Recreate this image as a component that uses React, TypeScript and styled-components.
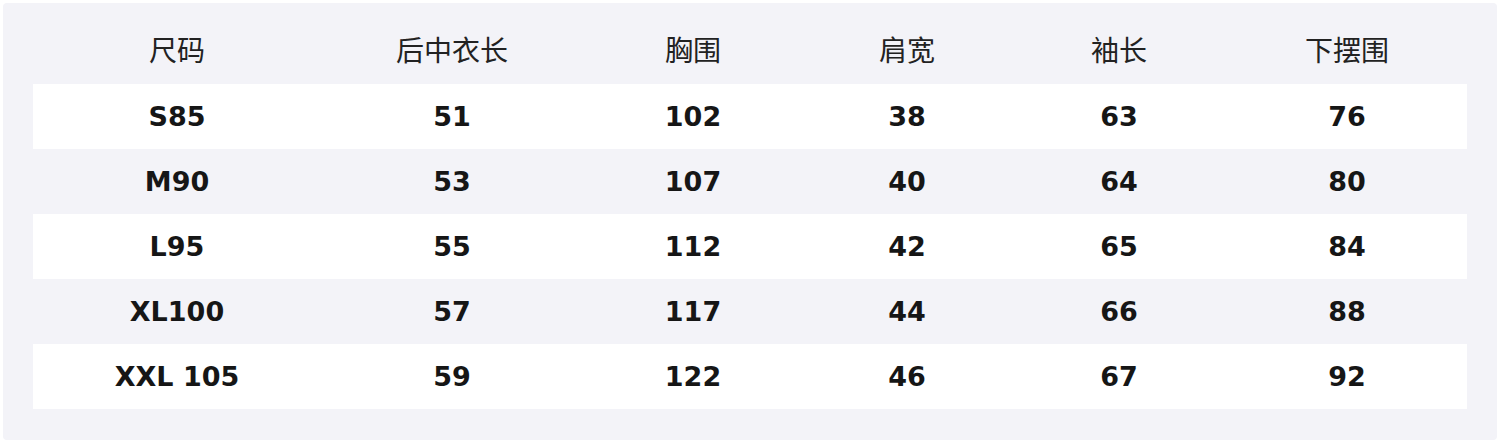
import React from 'react';
import styled, { createGlobalStyle } from 'styled-components';

const GlobalStyle = createGlobalStyle`
  html, body {
    margin: 0;
    padding: 0;
    background: #ffffff;
  }
`;

const Page = styled.div`
  padding: 3px;
  width: 1500px;
  height: 443px;
  box-sizing: border-box;
`;

const Panel = styled.div`
  background: #f3f3f8;
  border-radius: 4px;
  height: 100%;
  box-sizing: border-box;
  padding: 16px 30px 31px 30px;
`;

const COLS = '288px 262px 220px 208px 216px 240px';

const Row = styled.div<{ $striped?: boolean }>`
  display: grid;
  grid-template-columns: ${COLS};
  height: 65px;
  align-items: center;
  background: ${(p) => (p.$striped ? '#ffffff' : 'transparent')};
`;

const HeadCell = styled.div`
  text-align: center;
  font-family: "Noto Sans CJK SC", "Noto Sans", sans-serif;
  font-size: 28px;
  font-weight: 400;
  color: #222222;
  padding-bottom: 5px;
`;

const Cell = styled.div`
  text-align: center;
  font-family: "DejaVu Sans", "Noto Sans", sans-serif;
  font-size: 27px;
  font-weight: 700;
  color: #161616;
`;

const headers = ['尺码', '后中衣长', '胸围', '肩宽', '袖长', '下摆围'];

const rows = [
  ['S85', '51', '102', '38', '63', '76'],
  ['M90', '53', '107', '40', '64', '80'],
  ['L95', '55', '112', '42', '65', '84'],
  ['XL100', '57', '117', '44', '66', '88'],
  ['XXL 105', '59', '122', '46', '67', '92'],
];

function App() {
  return (
    <Page>
      <GlobalStyle />
      <Panel>
        <Row>
          {headers.map((h) => (
            <HeadCell key={h}>{h}</HeadCell>
          ))}
        </Row>
        {rows.map((r, i) => (
          <Row key={r[0]} $striped={i % 2 === 0}>
            {r.map((v, j) => (
              <Cell key={j}>{v}</Cell>
            ))}
          </Row>
        ))}
      </Panel>
    </Page>
  );
}

export default App;
